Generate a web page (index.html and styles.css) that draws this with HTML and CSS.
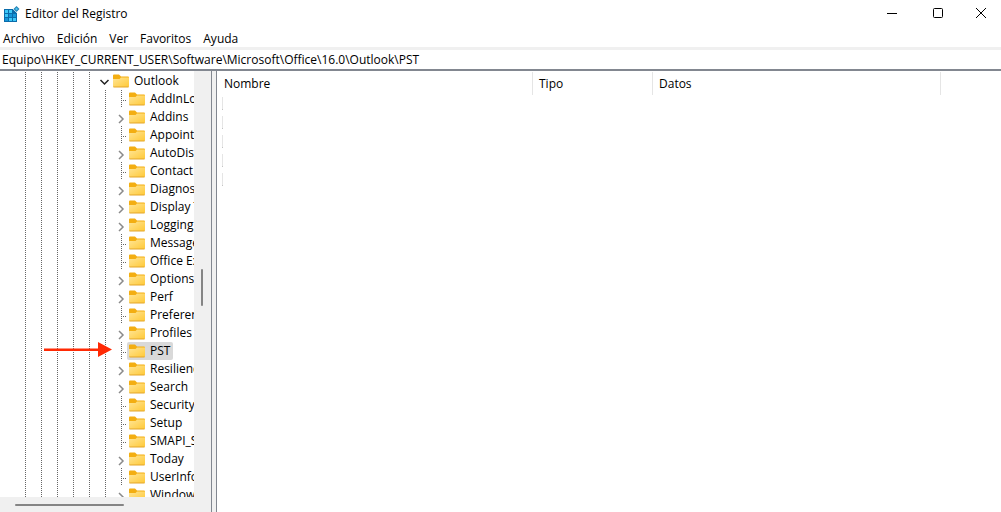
FILE: index.html
```
<!DOCTYPE html>
<html lang="es">
<head>
    <meta charset="UTF-8">
    <meta name="viewport" content="width=device-width, initial-scale=1.0">
    <title>Editor del Registro</title>
    <link rel="stylesheet" href="styles.css">
</head>
<body>
    <header class="titlebar">
        <svg class="app-icon" width="16" height="16" viewBox="0 0 16 16">
            <path fill="#0a6cab" d="M0 3h9l4 4v9H0z"/>
            <path fill="#3cc8f8" d="M1 4h3v3H1zM5 4h3v3H5zM1 8h3v3H1zM9 12h3v3H9zM5 12h3v3H5z"/>
            <path fill="#1595d8" d="M5 8h3v3H5zM9 8h3v3H9zM1 12h3v3H1z"/>
            <path fill="#ffffff" d="M9 3l4 4V3z"/>
            <path fill="#2382b5" d="M12.500 0l3 3-3 3-3-3z"/>
            <path fill="#4fc3ee" d="M12.500 1.500L14 3l-1.500 1.500L11 3z"/>
        </svg>
        <h1>Editor del Registro</h1>
        <div class="window-buttons">
            <button type="button" aria-label="Minimizar"><svg width="12" height="12"><path d="M1 6.500h10"/></svg></button>
            <button type="button" aria-label="Maximizar"><svg width="12" height="12"><rect x="1.500" y="1.500" width="9" height="9" rx="1"/></svg></button>
            <button type="button" aria-label="Cerrar"><svg width="12" height="12"><path d="M1 1l10 10M11 1L1 11"/></svg></button>
        </div>
    </header>
    <nav class="menu">
        <button type="button">Archivo</button>
        <button type="button">Edición</button>
        <button type="button">Ver</button>
        <button type="button">Favoritos</button>
        <button type="button">Ayuda</button>
    </nav>
    <input class="address" type="text" aria-label="Ruta" value="Equipo\HKEY_CURRENT_USER\Software\Microsoft\Office\16.0\Outlook\PST">
    <main>
        <aside class="sidebar">
            <div class="tree-area">
                <ul class="tree" id="tree"></ul>
                <svg class="arrow" width="68" height="16" viewBox="0 0 68 16">
                    <path fill="#ff2a05" d="M0 6.500h54V0l14 7.500L54 15V9H0z"/>
                </svg>
            </div>
            <div class="scroll-y"><span></span></div>
            <div class="scroll-x"><span></span></div>
        </aside>
        <div class="splitter"></div>
        <section class="values">
            <table>
                <thead>
                    <tr>
                        <th class="col-name">Nombre</th>
                        <th class="col-type">Tipo</th>
                        <th class="col-data">Datos</th>
                        <th></th>
                    </tr>
                </thead>
                <tbody>
                    <tr><td colspan="4"><span></span></td></tr>
                    <tr><td colspan="4"><span></span></td></tr>
                    <tr><td colspan="4"><span></span></td></tr>
                    <tr><td colspan="4"><span></span></td></tr>
                    <tr><td colspan="4"><span></span></td></tr>
                </tbody>
            </table>
        </section>
    </main>
    <script src="tree.js"></script>
</body>
</html>
```
FILE: styles.css
```
* {
    box-sizing: border-box;
}
body {
    margin: 0;
    height: 100vh;
    display: flex;
    flex-direction: column;
    overflow: hidden;
    background: #ffffff;
    color: #000000;
    font-family: "Open Sans", "Noto Sans", sans-serif;
    font-size: 12px;
    line-height: 18px;
}
button, input {
    font: inherit;
    color: inherit;
    border: none;
    background: none;
    padding: 0;
    margin: 0;
}

/* Title bar */
.titlebar {
    display: flex;
    align-items: center;
    height: 28px;
    padding-left: 4px;
}
.app-icon {
    margin-right: 5px;
}
.titlebar h1 {
    margin: 0;
    font-size: 12px;
    font-weight: normal;
}
.window-buttons {
    display: flex;
    margin-left: auto;
    height: 26px;
    align-self: flex-start;
}
.window-buttons button {
    width: 46px;
    display: flex;
    align-items: center;
    justify-content: center;
}
.window-buttons button:last-child {
    width: 40px;
}
.window-buttons svg {
    fill: none;
    stroke: #000000;
}

/* Menu and address */
.menu {
    display: flex;
    gap: 12px;
    padding: 2px 3px 0;
    height: 22px;
    border-bottom: 3px solid #f0f0f0;
}
.menu button {
    height: 18px;
}
.address {
    height: 21px;
    padding: 0 2px;
    border-bottom: 2px solid #828790;
    outline: none;
}
main {
    flex: 1;
    display: flex;
    min-height: 0;
}

/* Key tree */
.sidebar {
    width: 211px;
    display: grid;
    grid-template-columns: 1fr 17px;
    grid-template-rows: 1fr 15px;
    background: #f0f0f0;
}
.tree-area {
    position: relative;
    overflow: hidden;
    background: #ffffff;
    min-width: 0;
    min-height: 0;
}
.tree {
    list-style: none;
    margin: 0;
    padding: 1px 0 0 17px;
}
.tree li {
    display: flex;
    height: 18px;
    white-space: nowrap;
}
.guide, .leaf, .expander {
    flex: none;
    width: 16px;
    height: 18px;
}
.guide, .leaf {
    background: linear-gradient(#666666 50%, transparent 50%) 8px 0 / 1px 2px repeat-y;
}
.leaf, .expander {
    width: 14px;
}
.leaf::after {
    content: "";
    display: block;
    width: 6px;
    height: 1px;
    margin: 10px 0 0 8px;
    background: linear-gradient(to right, #666666 50%, transparent 50%) 0 0 / 2px 1px;
}
.expander svg {
    display: block;
    fill: none;
    stroke: #8a8a8a;
    stroke-width: 1.5;
}
.expander.open svg {
    stroke: #222222;
}
.key {
    display: flex;
    align-items: center;
    gap: 5px;
    padding: 0 3px 0 2px;
    border-radius: 2px;
}
.key svg {
    flex: none;
}
.key.selected {
    background: #d9d9d9;
}
.arrow {
    position: absolute;
    left: 44px;
    top: 271px;
}
.scroll-y {
    padding: 198px 8px 0 7px;
}
.scroll-y span {
    display: block;
    height: 37px;
    border-radius: 1px;
    background: #858585;
}
.scroll-x {
    padding: 7px 0 0 15px;
}
.scroll-x span {
    display: block;
    width: 109px;
    height: 2px;
    border-radius: 1px;
    background: #858585;
}
.splitter {
    width: 6px;
    background: #f0f0f0;
    border: solid #828790;
    border-width: 0 1px;
}

/* Values list */
.values {
    flex: 1;
    min-width: 0;
    padding-top: 1px;
}
.values table {
    width: 100%;
    table-layout: fixed;
    border-collapse: separate;
    border-spacing: 0;
}
.values th {
    height: 24px;
    padding: 0 6px;
    font-weight: normal;
    text-align: left;
    background: linear-gradient(#e5e5e5, #e5e5e5) right top / 1px 23px no-repeat;
}
.values th:first-child {
    padding-left: 7px;
}
.values th:last-child {
    background: none;
}
.col-name {
    width: 316px;
}
.col-type {
    width: 120px;
}
.col-data {
    width: 288px;
}
.values td {
    height: 19px;
    padding: 1px 5px 0;
    vertical-align: top;
}
.values td span {
    display: block;
    width: 1px;
    height: 13px;
    background: linear-gradient(#e5e5e5 12px, #c4c4c4 12px);
}
```
FILE: tree.js
```
// [name, has subkeys]
const keys = [
    ["AddInLoadTimes", false],
    ["Addins", true],
    ["AppointmentReg", false],
    ["AutoDiscover", true],
    ["Contact", false],
    ["Diagnostics", true],
    ["Display Types", true],
    ["Logging", true],
    ["Message", false],
    ["Office Explorer", false],
    ["Options", true],
    ["Perf", true],
    ["Preferences", false],
    ["Profiles", true],
    ["PST", false],
    ["Resiliency", true],
    ["Search", true],
    ["Security", false],
    ["Setup", false],
    ["SMAPI_Settings", false],
    ["Today", true],
    ["UserInfo", false],
    ["Windows", true]
];

const folder = `<svg width="16" height="14" viewBox="0 0 16 14">
    <defs>
        <linearGradient id="front" x1="0" y1="0" x2="1" y2="1">
            <stop offset="0" stop-color="#ffe596"/>
            <stop offset="1" stop-color="#ffc937"/>
        </linearGradient>
    </defs>
    <path fill="#f3ae12" d="M0 1.500Q0 .500 1 .500h5l2 2h7q1 0 1 1V8H0z"/>
    <path fill="url(#front)" d="M0 5h6.500L8 3.500h8V12q0 1-1 1H1q-1 0-1-1z"/>
    <path fill="#e3a52b" d="M0 12.500h16q0 1-1 1H1q-1 0-1-1z"/>
</svg>`;

function addKey(name, level, state) {
    const li = document.createElement("li");
    let html = '<span class="guide"></span>'.repeat(level);
    if (state === "leaf") {
        html += '<span class="leaf"></span>';
    } else {
        const path = state === "open" ? "M3.500 8l4 4 4-4" : "M6 7l4 4-4 4";
        html += `<span class="expander ${state}"><svg width="14" height="18"><path d="${path}"/></svg></span>`;
    }
    const selected = name === "PST" ? " selected" : "";
    html += `<button type="button" class="key${selected}">${folder}<span>${name}</span></button>`;
    li.innerHTML = html;
    document.getElementById("tree").appendChild(li);
}

addKey("Outlook", 5, "open");
keys.forEach(([name, hasChildren]) => addKey(name, 6, hasChildren ? "closed" : "leaf"));
```
